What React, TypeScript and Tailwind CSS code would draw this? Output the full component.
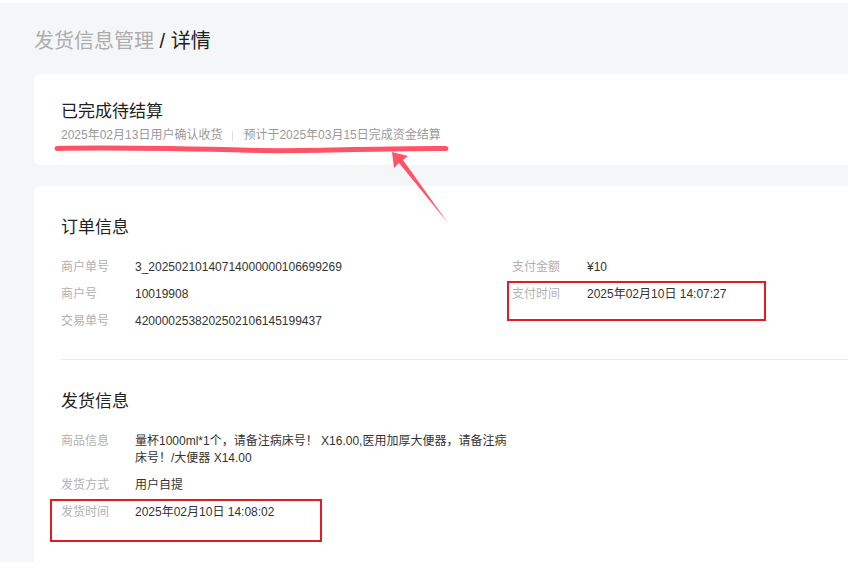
import React from "react";

const font = { fontFamily: '"Liberation Sans", "Noto Sans CJK SC", sans-serif' };

function Row({ label, value, className = "" }: { label: string; value: React.ReactNode; className?: string }) {
  return (
    <div className={"flex text-[12px] leading-[17px] " + className}>
      <div className="w-[74px] shrink-0 text-[#b0b0b0]">{label}</div>
      <div className="text-[#333]">{value}</div>
    </div>
  );
}

export default function App() {
  return (
    <div className="relative w-[848px] h-[578px] bg-white overflow-hidden" style={font}>
      <div className="mt-[3px] h-[559px] bg-[#f5f6f8] pl-[34px] overflow-hidden">
        <div className="pt-[24px] text-[20px] leading-[28px]">
          <span className="text-[#adadad]">发货信息管理</span>
          <span className="text-[#222]"> / 详情</span>
        </div>
        <div className="mt-[19px] h-[91px] bg-white rounded-l-[6px] pl-[27px] pt-[27px]">
          <div className="text-[17px] leading-[22px] text-[#222]">已完成待结算</div>
          <div className="mt-[4px] flex items-center text-[12px] leading-[17px] text-[#999]">
            <span>2025年02月13日用户确认收货</span>
            <span className="mx-[10px] h-[10px] w-px bg-[#e0e0e0]"></span>
            <span>预计于2025年03月15日完成资金结算</span>
          </div>
        </div>
        <div className="mt-[21px] h-[400px] bg-white rounded-l-[6px] pl-[27px] pt-[31px]">
          <div className="text-[17px] leading-[22px] text-[#222]">订单信息</div>
          <div className="mt-[20px] flex">
            <div className="w-[451px] flex flex-col gap-[10px]">
              <Row label="商户单号" value="3_20250210140714000000106699269" />
              <Row label="商户号" value="10019908" />
              <Row label="交易单号" value="4200002538202502106145199437" />
            </div>
            <div className="flex flex-col gap-[10px]">
              <Row label="支付金额" value="¥10" className="[&>div:first-child]:w-[75px]" />
              <Row label="支付时间" value="2025年02月10日 14:07:27" className="[&>div:first-child]:w-[75px]" />
            </div>
          </div>
          <div className="mt-[29px] h-px bg-[#ebebeb]"></div>
          <div className="mt-[31px] text-[17px] leading-[22px] text-[#222]">发货信息</div>
          <div className="mt-[20px] flex flex-col gap-[10px]">
            <Row
              label="商品信息"
              value={<div className="w-[376px]">量杯1000ml*1个，请备注病床号！ X16.00,医用加厚大便器，请备注病床号！/大便器 X14.00</div>}
            />
            <Row label="发货方式" value="用户自提" />
            <Row label="发货时间" value="2025年02月10日 14:08:02" />
          </div>
        </div>
      </div>

      {/* annotations */}
      <div className="absolute left-[507px] top-[281px] w-[259px] h-[40px] border-2 border-[#e31b23]"></div>
      <div className="absolute left-[50px] top-[499px] w-[272px] h-[43px] border-2 border-[#e31b23]"></div>
      <svg className="absolute left-0 top-0" width="848" height="578" viewBox="0 0 848 578">
        <path
          d="M57 148.5 C 120 147, 200 149, 260 150.5 C 320 151.5, 380 148, 446 148.5"
          stroke="#ff5468"
          strokeWidth="5"
          strokeLinecap="round"
          fill="none"
        />
        <path d="M392 152 L 394 168 L 399 163 L 448 223 L 403 160 L 408 156 Z" fill="#ff5468" />
      </svg>
    </div>
  );
}
